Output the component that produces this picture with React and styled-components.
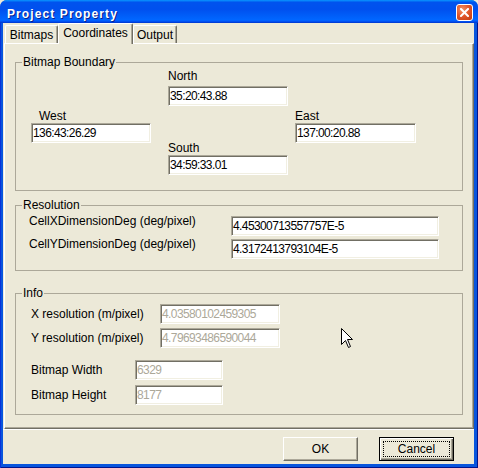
import React from "react";
import styled, { createGlobalStyle, css } from "styled-components";

const GlobalStyle = createGlobalStyle`
  html, body { margin: 0; padding: 0; background: #ece9d8; overflow: hidden; }
  body { font-family: "Liberation Sans", Arial, sans-serif; font-size: 12px; color: #000; }
  * { box-sizing: border-box; }
`;

const Window = styled.div`
  position: relative;
  width: 478px;
  height: 468px;
  display: flex;
  flex-direction: column;
  background: #0855dd;
  border-radius: 7px 7px 0 0;
  overflow: hidden;
`;

const TitleBar = styled.div`
  flex: none;
  height: 23px;
  display: flex;
  align-items: flex-start;
  padding: 0 5px 0 7px;
  background: linear-gradient(
    180deg,
    #0997ff 0%,
    #0053ee 10%,
    #0050ee 40%,
    #0066ff 85%,
    #005bff 92%,
    #003dd7 96%,
    #003dd7 100%
  );
`;

const Title = styled.span`
  margin-top: 7px;
  font-weight: bold;
  font-size: 12px;
  line-height: 14px;
  letter-spacing: 1.1px;
  color: #fff;
  text-shadow: 1px 1px #0a1f8c;
`;

const CloseButton = styled.div`
  margin-left: auto;
  margin-top: 4px;
  width: 17px;
  height: 17px;
  border: 1px solid #fff;
  border-radius: 3px;
  background: radial-gradient(circle at 35% 30%, #f29466 0%, #e2582c 45%, #c13a10 100%);
  display: flex;
  align-items: center;
  justify-content: center;
`;

const Frame = styled.div`
  flex: 1;
  display: flex;
  padding: 0 4px 4px 3px;
  box-shadow: inset 1px 0 #0831d9, inset -1px 0 #00138c, inset 0 -1px #00138c;
`;

const Client = styled.div`
  flex: 1;
  display: flex;
  flex-direction: column;
  background: #ece9d8;
`;

const TabStrip = styled.div`
  flex: none;
  height: 20px;
  display: flex;
  align-items: flex-end;
  padding-left: 2px;
  position: relative;
  z-index: 2;
`;

const Tab = styled.div`
  width: ${(p) => p.$w}px;
  height: ${(p) => (p.$active ? 21 : 18)}px;
  margin-bottom: ${(p) => (p.$active ? -1 : 0)}px;
  padding-top: 2px;
  text-align: center;
  line-height: 14px;
  background: #ece9d8;
  border-top: 1px solid #fff;
  border-left: 1px solid #fff;
  border-right: 1px solid #716f64;
  box-shadow: inset -1px 0 #aca899;
  border-radius: 2px 2px 0 0;
  position: relative;
  z-index: ${(p) => (p.$active ? 2 : 1)};
`;

const Panel = styled.div`
  flex: 1;
  margin-left: 1px;
  display: flex;
  flex-direction: column;
  padding: 11px 10px 0 10px;
  border: 1px solid;
  border-color: #fff #716f64 #716f64 #fff;
  box-shadow: inset -1px -1px #aca899;
`;

const Group = styled.fieldset`
  margin: ${(p) => p.$mt || 0}px 0 0;
  padding: 0;
  border: 1px solid #aca899;
  min-width: 0;
`;

const Legend = styled.legend`
  margin-left: 6px;
  padding: 0 1px;
  font-size: 12px;
  line-height: 14px;
`;

const BoundaryGrid = styled.div`
  display: grid;
  grid-template-columns: 137px 127px 121px;
  padding: 0 0 15px 15px;
`;

const Column = styled.div`
  display: flex;
  flex-direction: column;
  padding-top: ${(p) => p.$pt || 0}px;
`;

const Field = styled.div`
  display: flex;
  flex-direction: column;
  margin-top: ${(p) => p.$mt || 0}px;
`;

const FieldLabel = styled.span`
  line-height: 14px;
  padding-left: ${(p) => p.$indent || 0}px;
  margin-bottom: ${(p) => p.$gap || 0}px;
`;

const TextBox = styled.input`
  width: ${(p) => p.$w}px;
  height: 20px;
  margin: 0;
  padding: 0 1px;
  font-family: "Liberation Sans", Arial, sans-serif;
  font-size: 12px;
  letter-spacing: -0.6px;
  color: ${(p) => (p.disabled ? "#aca899" : "#000")};
  background: #fff;
  border: 1px solid;
  border-color: #aca899 #fff #fff #aca899;
  box-shadow: inset 1px 1px #716f64, inset -1px -1px #f1efe2;
  outline: none;
  &:disabled {
    background: #fff;
    -webkit-text-fill-color: #aca899;
    opacity: 1;
  }
`;

const RowList = styled.div`
  display: flex;
  flex-direction: column;
  gap: ${(p) => p.$gap}px;
  margin-top: ${(p) => p.$mt || 0}px;
`;

const GroupBody = styled.div`
  padding: 4px 0 ${(p) => p.$pb}px ${(p) => p.$pl}px;
`;

const Row = styled.div`
  display: flex;
  align-items: ${(p) => (p.$center ? "center" : "flex-start")};
`;

const RowLabel = styled.span`
  flex: none;
  width: ${(p) => p.$w}px;
  line-height: 14px;
  margin-top: ${(p) => (p.$center ? 0 : -2)}px;
`;

const Footer = styled.div`
  flex: none;
  display: flex;
  justify-content: flex-end;
  gap: 21px;
  padding: 7px 20px 3px 0;
  border-top: 1px solid #fff;
`;

const Button = styled.button`
  width: 75px;
  height: 24px;
  padding: 0;
  font-family: "Liberation Sans", Arial, sans-serif;
  font-size: 12px;
  color: #000;
  background: #ece9d8;
  border: 1px solid;
  border-color: #fff #716f64 #716f64 #fff;
  box-shadow: inset -1px -1px #aca899;
  ${(p) =>
    p.$default &&
    css`
      border-color: #000;
      box-shadow: inset 1px 1px #fff, inset -1px -1px #716f64, inset -2px -2px #aca899;
      outline: 1px dotted #000;
      outline-offset: -5px;
    `}
`;

const Cursor = styled.svg`
  position: absolute;
  left: 341px;
  top: 328px;
  pointer-events: none;
`;

export default function App() {
  return (
    <>
      <GlobalStyle />
      <Window>
        <TitleBar>
          <Title>Project Property</Title>
          <CloseButton>
            <svg width="9" height="9" viewBox="0 0 9 9">
              <path d="M1 1 L8 8 M8 1 L1 8" stroke="#fff" strokeWidth="2" strokeLinecap="square" />
            </svg>
          </CloseButton>
        </TitleBar>
        <Frame>
          <Client>
            <TabStrip>
              <Tab $w={53}>Bitmaps</Tab>
              <Tab $w={75} $active>Coordinates</Tab>
              <Tab $w={44}>Output</Tab>
            </TabStrip>
            <Panel>
              <Group>
                <Legend>Bitmap Boundary</Legend>
                <BoundaryGrid>
                  <Column $pt={40}>
                    <Field>
                      <FieldLabel $indent={8}>West</FieldLabel>
                      <TextBox $w={120} readOnly value="136:43:26.29" />
                    </Field>
                  </Column>
                  <Column>
                    <Field>
                      <FieldLabel $gap={3}>North</FieldLabel>
                      <TextBox $w={120} readOnly value="35:20:43.88" />
                    </Field>
                    <Field $mt={35}>
                      <FieldLabel>South</FieldLabel>
                      <TextBox $w={120} readOnly value="34:59:33.01" />
                    </Field>
                  </Column>
                  <Column $pt={40}>
                    <Field>
                      <FieldLabel>East</FieldLabel>
                      <TextBox $w={121} readOnly value="137:00:20.88" />
                    </Field>
                  </Column>
                </BoundaryGrid>
              </Group>

              <Group $mt={7}>
                <Legend>Resolution</Legend>
                <GroupBody $pl={13} $pb={11}>
                  <RowList $gap={3}>
                    <Row>
                      <RowLabel $w={202}>CellXDimensionDeg (deg/pixel)</RowLabel>
                      <TextBox $w={208} readOnly value="4.45300713557757E-5" />
                    </Row>
                    <Row>
                      <RowLabel $w={202}>CellYDimensionDeg (deg/pixel)</RowLabel>
                      <TextBox $w={208} readOnly value="4.3172413793104E-5" />
                    </Row>
                  </RowList>
                </GroupBody>
              </Group>

              <Group $mt={15}>
                <Legend>Info</Legend>
                <GroupBody $pl={15} $pb={9}>
                  <RowList $gap={4}>
                    <Row $center>
                      <RowLabel $center $w={129}>X resolution (m/pixel)</RowLabel>
                      <TextBox $w={120} disabled value="4.03580102459305" />
                    </Row>
                    <Row $center>
                      <RowLabel $center $w={129}>Y resolution (m/pixel)</RowLabel>
                      <TextBox $w={120} disabled value="4.79693486590044" />
                    </Row>
                  </RowList>
                  <RowList $gap={5} $mt={12}>
                    <Row $center>
                      <RowLabel $center $w={104}>Bitmap Width</RowLabel>
                      <TextBox $w={88} disabled value="6329" />
                    </Row>
                    <Row $center>
                      <RowLabel $center $w={104}>Bitmap Height</RowLabel>
                      <TextBox $w={88} disabled value="8177" />
                    </Row>
                  </RowList>
                </GroupBody>
              </Group>
            </Panel>
            <Footer>
              <Button>OK</Button>
              <Button $default>Cancel</Button>
            </Footer>
          </Client>
        </Frame>
        <Cursor width="13" height="21" viewBox="0 0 13 21">
          <path
            d="M0.5 0.5 L0.5 16.5 L4.5 12.5 L7.5 19.5 L9.5 18.5 L6.5 11.5 L11.5 11.5 Z"
            fill="#fff"
            stroke="#000"
            strokeWidth="1"
            strokeLinejoin="miter"
          />
        </Cursor>
      </Window>
    </>
  );
}
